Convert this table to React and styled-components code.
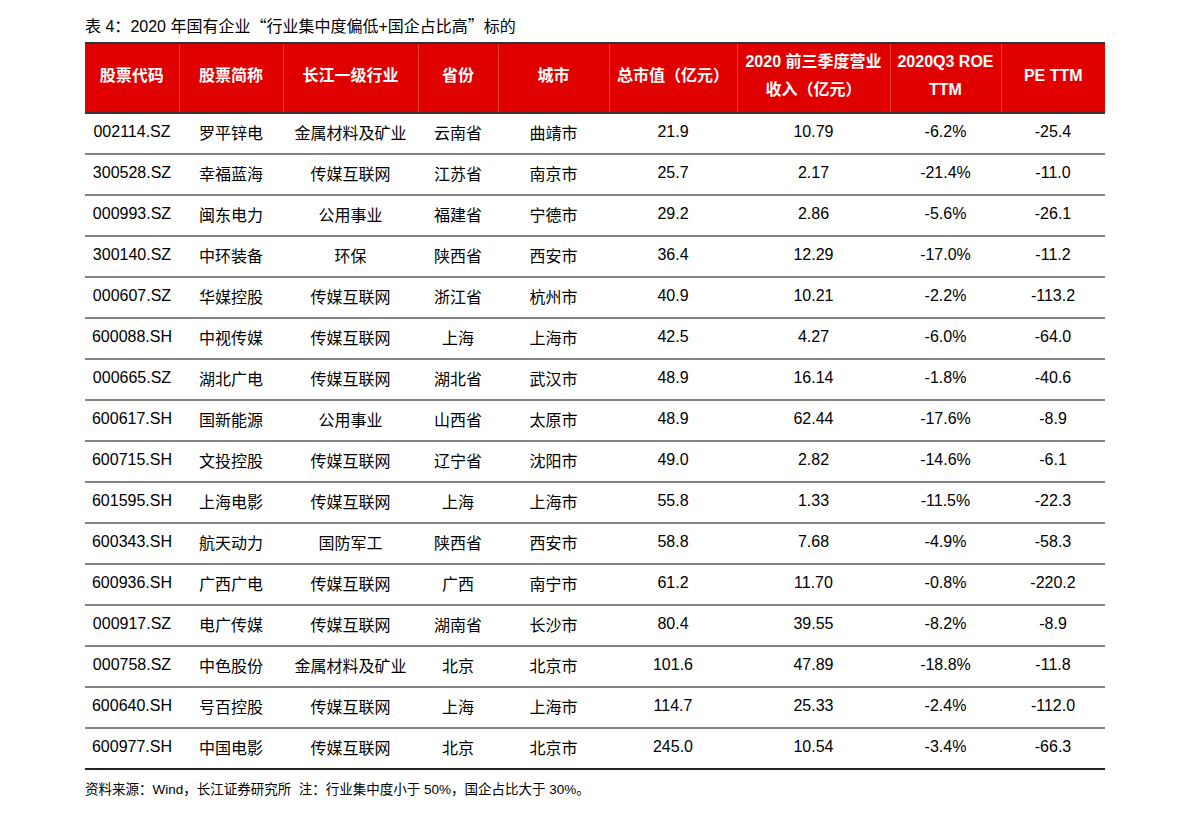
import React from "react";
import styled, { createGlobalStyle } from "styled-components";

const GlobalStyle = createGlobalStyle`
  html, body {
    margin: 0;
    padding: 0;
    background: #ffffff;
  }
  body {
    font-family: "Liberation Sans", "Noto Sans CJK SC", Arial, sans-serif;
    color: #000;
  }
`;

const Page = styled.div`
  width: 1191px;
  height: 817px;
  padding: 15px 0 0 85px;
  box-sizing: border-box;
`;

const Caption = styled.div`
  font-size: 16px;
  line-height: 20px;
  height: 27px;
  color: #000;
  white-space: pre;
`;

const Wide = styled.span`
  font-family: "Noto Sans CJK SC", sans-serif;
`;

const Table = styled.table`
  width: 1020px;
  border-collapse: collapse;
  table-layout: fixed;
  border-top: 2px solid #333;
  border-bottom: 2px solid #222;
`;

const HeadCell = styled.th`
  background: #e00000;
  color: #fff;
  font-weight: bold;
  font-size: 16px;
  line-height: 28px;
  height: 70px;
  padding: 0 2px 4px;
  box-sizing: border-box;
  text-align: center;
  white-space: nowrap;
  border-left: 1px solid #e43a3a;
  border-bottom: 2px solid #333;
  &:first-child {
    border-left: none;
  }
`;

const Row = styled.tr`
  border-top: 2px solid #838383;
  &:first-child {
    border-top: none;
  }
`;

const Cell = styled.td`
  height: 41px;
  padding: 0 0 4px;
  box-sizing: border-box;
  font-size: 16px;
  text-align: center;
  white-space: nowrap;
`;

const Note = styled.div`
  margin-top: 9px;
  font-size: 13.5px;
  line-height: 18px;
  white-space: pre;
`;

const columns = [
  { title: "股票代码", width: 94 },
  { title: "股票简称", width: 104 },
  { title: "长江一级行业", width: 135 },
  { title: "省份", width: 80 },
  { title: "城市", width: 111 },
  { title: "总市值（亿元）", width: 128 },
  { title: ["2020 前三季度营业", "收入（亿元）"], width: 153 },
  { title: ["2020Q3 ROE", "TTM"], width: 111 },
  { title: "PE TTM", width: 104 },
];

const rows = [
  ["002114.SZ", "罗平锌电", "金属材料及矿业", "云南省", "曲靖市", "21.9", "10.79", "-6.2%", "-25.4"],
  ["300528.SZ", "幸福蓝海", "传媒互联网", "江苏省", "南京市", "25.7", "2.17", "-21.4%", "-11.0"],
  ["000993.SZ", "闽东电力", "公用事业", "福建省", "宁德市", "29.2", "2.86", "-5.6%", "-26.1"],
  ["300140.SZ", "中环装备", "环保", "陕西省", "西安市", "36.4", "12.29", "-17.0%", "-11.2"],
  ["000607.SZ", "华媒控股", "传媒互联网", "浙江省", "杭州市", "40.9", "10.21", "-2.2%", "-113.2"],
  ["600088.SH", "中视传媒", "传媒互联网", "上海", "上海市", "42.5", "4.27", "-6.0%", "-64.0"],
  ["000665.SZ", "湖北广电", "传媒互联网", "湖北省", "武汉市", "48.9", "16.14", "-1.8%", "-40.6"],
  ["600617.SH", "国新能源", "公用事业", "山西省", "太原市", "48.9", "62.44", "-17.6%", "-8.9"],
  ["600715.SH", "文投控股", "传媒互联网", "辽宁省", "沈阳市", "49.0", "2.82", "-14.6%", "-6.1"],
  ["601595.SH", "上海电影", "传媒互联网", "上海", "上海市", "55.8", "1.33", "-11.5%", "-22.3"],
  ["600343.SH", "航天动力", "国防军工", "陕西省", "西安市", "58.8", "7.68", "-4.9%", "-58.3"],
  ["600936.SH", "广西广电", "传媒互联网", "广西", "南宁市", "61.2", "11.70", "-0.8%", "-220.2"],
  ["000917.SZ", "电广传媒", "传媒互联网", "湖南省", "长沙市", "80.4", "39.55", "-8.2%", "-8.9"],
  ["000758.SZ", "中色股份", "金属材料及矿业", "北京", "北京市", "101.6", "47.89", "-18.8%", "-11.8"],
  ["600640.SH", "号百控股", "传媒互联网", "上海", "上海市", "114.7", "25.33", "-2.4%", "-112.0"],
  ["600977.SH", "中国电影", "传媒互联网", "北京", "北京市", "245.0", "10.54", "-3.4%", "-66.3"],
];

const App = () => {
  return (
    <>
      <GlobalStyle />
      <Page>
        <Caption>
          表 4<Wide>：</Wide>2020 年国有企业<Wide>“</Wide>行业集中度偏低+国企占比高<Wide>”</Wide>标的
        </Caption>
        <Table>
          <colgroup>
            {columns.map((col, i) => (
              <col key={i} style={{ width: col.width }} />
            ))}
          </colgroup>
          <thead>
            <tr>
              {columns.map((col, i) => (
                <HeadCell key={i}>
                  {Array.isArray(col.title)
                    ? col.title.map((line, j) => <div key={j}>{line}</div>)
                    : col.title}
                </HeadCell>
              ))}
            </tr>
          </thead>
          <tbody>
            {rows.map((row) => (
              <Row key={row[0]}>
                {row.map((val, i) => (
                  <Cell key={i}>{val}</Cell>
                ))}
              </Row>
            ))}
          </tbody>
        </Table>
        <Note>
          资料来源<Wide>：</Wide>Wind<Wide>，</Wide>长江证券研究所  注<Wide>：</Wide>行业集中度小于 50%<Wide>，</Wide>国企占比大于 30%<Wide>。</Wide>
        </Note>
      </Page>
    </>
  );
};

export default App;
